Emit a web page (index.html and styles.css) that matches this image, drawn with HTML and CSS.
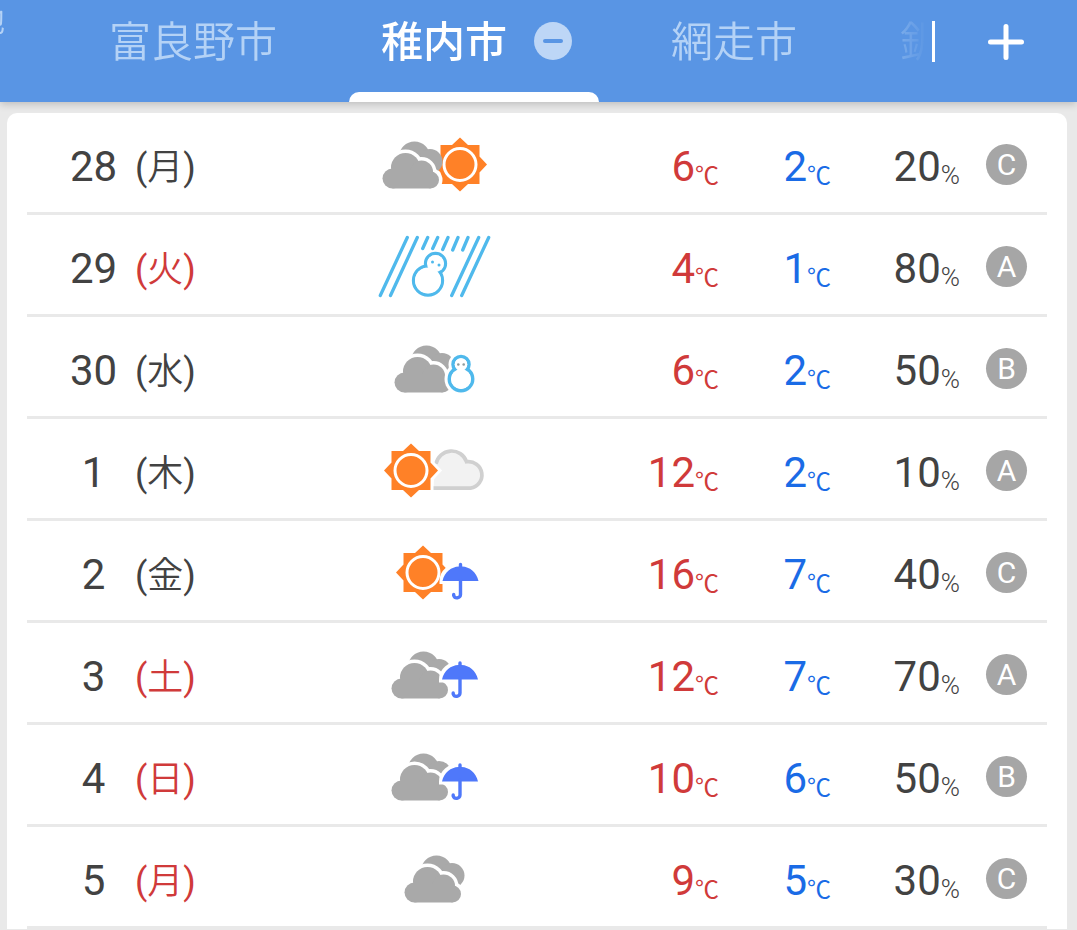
FILE: index.html
```html
<!DOCTYPE html>
<html lang="ja">
<head>
<meta charset="utf-8">
<meta name="viewport" content="width=device-width, initial-scale=1">
<title>週間天気 - 稚内市</title>
<link rel="stylesheet" href="styles.css">
</head>
<body>
<svg class="sprite" aria-hidden="true">
  <defs>
    <g id="sun">
      <path class="halo" d="M0-27 8-19.5H19.5V-8L27 0 19.5 8V19.5H8L0 27-8 19.5H-19.5V8L-27 0-19.5-8V-19.5H-8Z"/>
      <path fill="#ff8127" d="M0-27 8-19.5H19.5V-8L27 0 19.5 8V19.5H8L0 27-8 19.5H-19.5V8L-27 0-19.5-8V-19.5H-8Z"/>
      <circle r="16" fill="none" stroke="#fff" stroke-width="3"/>
    </g>
    <g id="cloud-front">
      <circle cx="17.500" cy="51.500" r="10"/>
      <circle cx="30.500" cy="40.500" r="14.500"/>
      <circle cx="46.500" cy="45" r="11.500"/>
      <circle cx="55.500" cy="53" r="8.500"/>
      <rect x="17.500" y="44" width="38" height="17.500"/>
    </g>
    <g id="clouds">
      <g fill="#a9a9a9"><circle cx="39.500" cy="30" r="15.500"/><circle cx="55" cy="34.500" r="12.500"/></g>
      <use href="#cloud-front" fill="#fff" stroke="#fff" stroke-width="7"/>
      <use href="#cloud-front" fill="#a9a9a9"/>
    </g>
    <g id="umbrella">
      <path class="halo" d="M-18 18A18 15.500 0 0 1 18 18Z"/>
      <path fill="#4f78fa" d="M-18 18C-16 9-9 4-1.700 3.600V1.500a1.700 1.700 0 0 1 3.400 0V3.600C9 4 16 9 18 18Z"/>
      <path fill="none" stroke="#4f78fa" stroke-width="3.400" stroke-linecap="round" d="M0 17V31.500A3.500 3.500 0 0 1-6.800 32.500V31.500"/>
    </g>
  </defs>
</svg>

<header class="topbar">
  <nav class="tabs" aria-label="地点">
    <a class="tab tab-current-place" href="#here">現在地</a>
    <a class="tab" href="#furano">富良野市</a>
    <div class="tab tab-selected">
      <a href="#wakkanai" aria-current="page">稚内市</a>
      <button class="remove" type="button" aria-label="稚内市を削除"><svg width="38" height="38" viewBox="0 0 38 38"><circle cx="19" cy="19" r="19" fill="#bdd6f6"/><path d="M11 19H27" stroke="#5995e4" stroke-width="4" stroke-linecap="round"/></svg></button>
    </div>
    <a class="tab tab-next" href="#abashiri">網走市</a>
    <a class="tab" href="#kushiro">釧路市</a>
  </nav>
  <button class="add" type="button" aria-label="地点を追加"><svg width="36" height="36" viewBox="0 0 36 36"><path d="M2.500 18H33.500M18 2.500V33.500" stroke="#fff" stroke-width="5" stroke-linecap="round"/></svg></button>
</header>

<main class="card">
  <table class="forecast" aria-label="週間天気予報">
    <colgroup><col class="col-day"><col class="col-week"><col><col class="col-high"><col class="col-low"><col class="col-rain"><col class="col-grade"></colgroup>
    <tbody>
      <tr>
        <th class="day" scope="row">28</th><td class="week">(<span>月</span>)</td>
        <td class="sky"><svg width="120" height="72" viewBox="0 0 120 72" role="img" aria-label="曇りのち晴れ"><use href="#sun" x="85" y="37.500"/><use href="#clouds"/></svg></td>
        <td class="num high">6<span class="unit">℃</span></td><td class="num low">2<span class="unit">℃</span></td><td class="num">20<span class="unit percent">%</span></td><td class="grade"><span class="badge">C</span></td>
      </tr>
      <tr>
        <th class="day" scope="row">29</th><td class="week red">(<span>火</span>)</td>
        <td class="sky"><svg width="120" height="72" viewBox="0 0 120 72" role="img" aria-label="暴風雪"><g fill="none" stroke="#4fb9ec" stroke-width="3.300" stroke-linecap="round"><path d="M32.300 8.500 5.300 66.500M42.300 8.500 15.500 66.500M52.700 8.500 47.700 19.500M62.700 8.500 57.700 19.500M73 8.500 67.700 20.500M83 8.500 77.700 21M93 8.500 87.700 21M103.700 8.500 76.700 66.500M113.700 8.500 86.700 66.500"/><circle cx="53" cy="51.500" r="14.500"/><circle cx="60.500" cy="34.500" r="10"/></g><g fill="#fff"><circle cx="53" cy="51.500" r="13"/><circle cx="60.500" cy="34.500" r="8.500"/></g><g fill="#4fb9ec"><circle cx="57.500" cy="33" r="1.500"/><circle cx="64" cy="36" r="1.500"/></g></svg></td>
        <td class="num high">4<span class="unit">℃</span></td><td class="num low">1<span class="unit">℃</span></td><td class="num">80<span class="unit percent">%</span></td><td class="grade"><span class="badge">A</span></td>
      </tr>
      <tr>
        <th class="day" scope="row">30</th><td class="week">(<span>水</span>)</td>
        <td class="sky"><svg width="120" height="72" viewBox="0 0 120 72" role="img" aria-label="曇り一時雪"><use href="#clouds" x="12"/><g fill="#fff"><circle cx="86" cy="48" r="16.500"/><circle cx="86" cy="33.500" r="12.500"/></g><g fill="none" stroke="#4fb9ec" stroke-width="3.500"><circle cx="86" cy="48" r="11.700"/><circle cx="86" cy="33.500" r="8"/></g><g fill="#fff"><circle cx="86" cy="48" r="10"/><circle cx="86" cy="33.500" r="6.300"/></g><g fill="#8f9b9c"><circle cx="83.300" cy="33.500" r="1.300"/><circle cx="88.700" cy="33.500" r="1.300"/></g></svg></td>
        <td class="num high">6<span class="unit">℃</span></td><td class="num low">2<span class="unit">℃</span></td><td class="num">50<span class="unit percent">%</span></td><td class="grade"><span class="badge">B</span></td>
      </tr>
      <tr>
        <th class="day" scope="row">1</th><td class="week">(<span>木</span>)</td>
        <td class="sky"><svg width="120" height="72" viewBox="0 0 120 72" role="img" aria-label="晴れのち曇り"><path d="M58 55.200H95.500A13.300 13.300 0 1 0 91.500 28.700 15.800 15.800 0 0 0 61 31" fill="#f2f2f2" stroke="#d0d0d0" stroke-width="3.700"/><use href="#sun" x="36" y="37.500"/></svg></td>
        <td class="num high">12<span class="unit">℃</span></td><td class="num low">2<span class="unit">℃</span></td><td class="num">10<span class="unit percent">%</span></td><td class="grade"><span class="badge">A</span></td>
      </tr>
      <tr>
        <th class="day" scope="row">2</th><td class="week">(<span>金</span>)</td>
        <td class="sky"><svg width="120" height="72" viewBox="0 0 120 72" role="img" aria-label="晴れ一時雨"><use href="#sun" x="48" y="37.500"/><use href="#umbrella" x="85.500" y="28"/></svg></td>
        <td class="num high">16<span class="unit">℃</span></td><td class="num low">7<span class="unit">℃</span></td><td class="num">40<span class="unit percent">%</span></td><td class="grade"><span class="badge">C</span></td>
      </tr>
      <tr>
        <th class="day" scope="row">3</th><td class="week red">(<span>土</span>)</td>
        <td class="sky"><svg width="120" height="72" viewBox="0 0 120 72" role="img" aria-label="曇り一時雨"><use href="#clouds" x="9"/><use href="#umbrella" x="85" y="24.500"/></svg></td>
        <td class="num high">12<span class="unit">℃</span></td><td class="num low">7<span class="unit">℃</span></td><td class="num">70<span class="unit percent">%</span></td><td class="grade"><span class="badge">A</span></td>
      </tr>
      <tr>
        <th class="day" scope="row">4</th><td class="week red">(<span>日</span>)</td>
        <td class="sky"><svg width="120" height="72" viewBox="0 0 120 72" role="img" aria-label="曇り一時雨"><use href="#clouds" x="9"/><use href="#umbrella" x="85" y="24.500"/></svg></td>
        <td class="num high">10<span class="unit">℃</span></td><td class="num low">6<span class="unit">℃</span></td><td class="num">50<span class="unit percent">%</span></td><td class="grade"><span class="badge">B</span></td>
      </tr>
      <tr>
        <th class="day" scope="row">5</th><td class="week red">(<span>月</span>)</td>
        <td class="sky"><svg width="120" height="72" viewBox="0 0 120 72" role="img" aria-label="曇り"><use href="#clouds" x="22"/></svg></td>
        <td class="num high">9<span class="unit">℃</span></td><td class="num low">5<span class="unit">℃</span></td><td class="num">30<span class="unit percent">%</span></td><td class="grade"><span class="badge">C</span></td>
      </tr>
    </tbody>
  </table>
</main>
</body>
</html>
```

FILE: styles.css
```css
* {
  box-sizing: border-box;
}

body {
  margin: 0;
  background: #e9e9e9;
  color: #424242;
  font-family: Roboto, "Noto Sans CJK JP", sans-serif;
}

button {
  display: flex;
  padding: 0;
  border: 0;
  background: none;
}

.sprite {
  position: absolute;
  width: 0;
  height: 0;
}

.halo {
  fill: #fff;
  stroke: #fff;
  stroke-width: 6;
}

/* Location tabs */
.topbar {
  display: flex;
  height: 102px;
  background: #5995e4;
  box-shadow: 0 2px 8px rgba(0, 0, 0, 0.2);
}

.tabs {
  flex: 1;
  min-width: 0;
  display: flex;
  overflow: hidden;
  font-family: "Noto Sans CJK JP", sans-serif;
  font-size: 42px;
  font-weight: 350;
  line-height: 48px;
  white-space: nowrap;
  mask-image: linear-gradient(to left, transparent 4px, #000 80px);
}

.tab {
  flex: none;
  padding: 15px 72px 0;
  color: #b4d2f6;
  text-decoration: none;
}

.tab-current-place {
  margin: 0 32px 0 -91px;
  padding: 0;
  font-size: 32px;
  line-height: 36px;
}

.tab-next {
  padding-right: 31px;
}

.tab-selected {
  position: relative;
  display: flex;
  align-items: flex-start;
  gap: 27px;
  padding: 15px 27px 0 32px;
}

.tab-selected::after {
  content: "";
  position: absolute;
  inset: auto 0 0;
  height: 10px;
  border-radius: 10px 10px 0 0;
  background: #fff;
}

.tab-selected a {
  color: #fff;
  font-weight: 500;
  text-decoration: none;
}

.remove {
  margin-top: 7px;
}

.add {
  width: 145px;
  height: 41px;
  margin-top: 21px;
  padding-left: 53px;
  align-items: center;
  border-left: 3px solid #fff;
}

/* Weekly forecast */
.card {
  margin: 11px 10px 0 7px;
  padding: 0 20px;
  border-radius: 10px 10px 0 0;
  background: #fff;
}

.forecast {
  width: 100%;
  table-layout: fixed;
  border-spacing: 0;
}

.col-day { width: 108px; }
.col-week { width: 62px; }
.col-high { width: 88px; }
.col-low { width: 112px; }
.col-rain { width: 129px; }
.col-grade { width: 87px; }

.forecast th,
.forecast td {
  height: 102px;
  padding: 0;
  border-bottom: 3px solid #e9e9e9;
  font-size: 42px;
  font-weight: 400;
  line-height: 48px;
  white-space: nowrap;
}

.forecast .day {
  padding: 8px 0 0 25px;
  text-align: center;
}

.forecast .week {
  padding-top: 10px;
  font-size: 36px;
}

.week span {
  font-weight: 350;
}

.forecast .red,
.forecast .high {
  color: #d03a3a;
}

.forecast .low {
  color: #1a6be6;
}

.forecast .sky {
  padding-left: 42px;
  text-align: center;
}

.sky svg {
  display: block;
  margin: 0 auto;
}

.forecast .num {
  padding-top: 8px;
  text-align: right;
}

.unit {
  position: relative;
  top: 3px;
  font-family: "Noto Sans CJK JP", sans-serif;
  font-size: 24px;
  font-weight: 400;
  line-height: 24px;
}

.percent {
  font-family: Roboto, sans-serif;
  font-size: 26px;
  font-weight: 300;
}

.forecast .grade {
  padding: 3px 20px 0 26px;
}

.badge {
  display: flex;
  align-items: center;
  justify-content: center;
  width: 41px;
  height: 41px;
  border-radius: 50%;
  background: #a6a6a6;
  color: #fff;
  font-size: 30px;
  line-height: 41px;
}
```
